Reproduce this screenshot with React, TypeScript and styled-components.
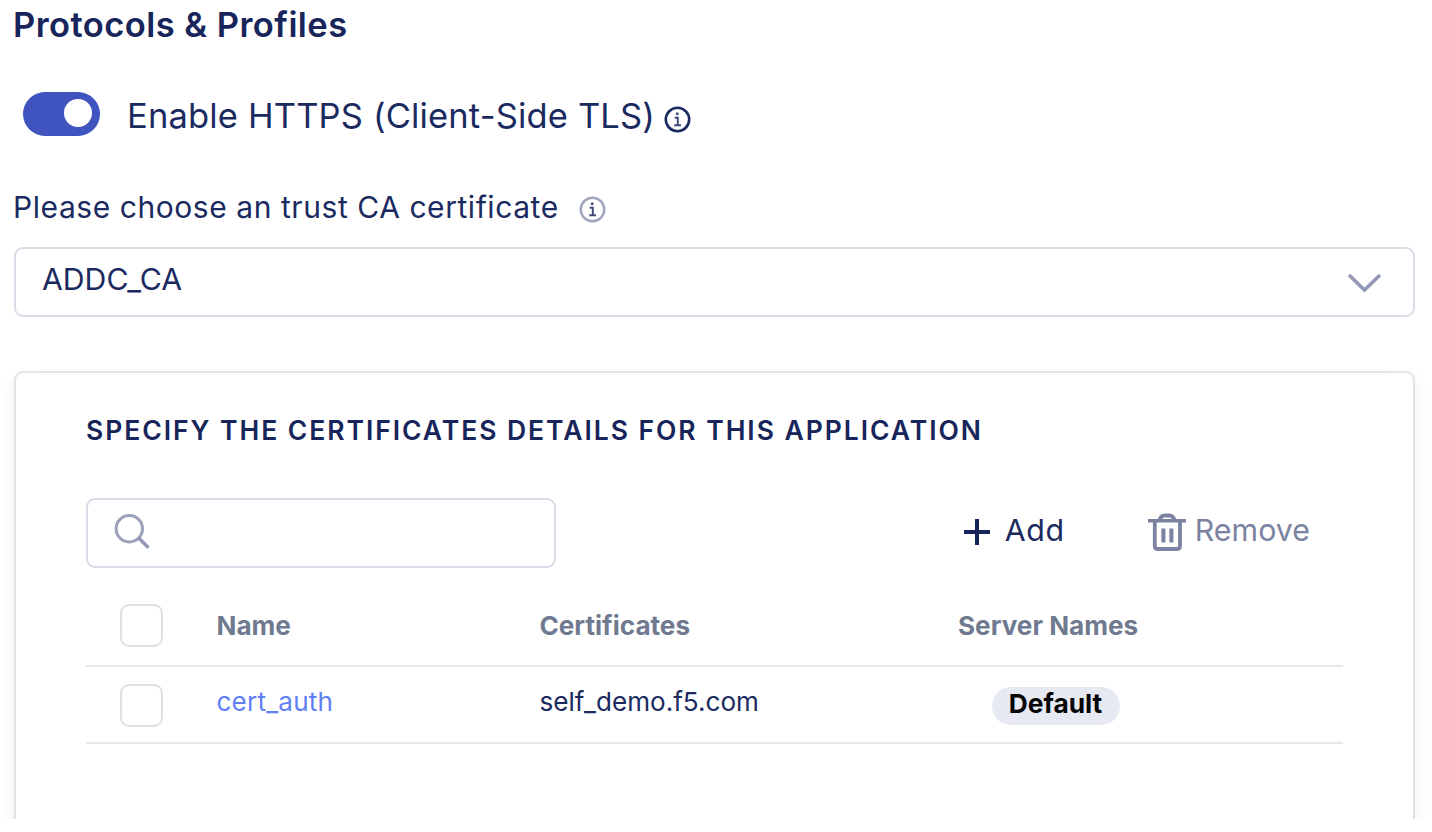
import React from "react";
import styled, { createGlobalStyle } from "styled-components";

const navy = "#1b2a5f";
const muted = "#a0a5bd";
const slate = "#7b82a2";

const GlobalStyle = createGlobalStyle`
  *, *::before, *::after { box-sizing: border-box; }
  body {
    margin: 0;
    background: #fff;
    color: ${navy};
    font-family: Inter, "Liberation Sans", sans-serif;
    overflow: hidden;
  }
`;

const Page = styled.main`
  display: flex;
  flex-direction: column;
  width: 1432px;
  height: 819px;
  padding: 0 17px 0 14px;
  overflow: hidden;

  & > * { flex-shrink: 0; }
`;

const Title = styled.h1`
  margin: 0 0 0 -1px;
  height: 48px;
  line-height: 49px;
  font-size: 34.5px;
  font-weight: 600;
  letter-spacing: 0.45px;
  color: #17255b;
`;

const ToggleRow = styled.div`
  display: flex;
  align-items: flex-start;
  height: 44px;
  margin-top: 44px;
  padding-left: 9px;
`;

const Switch = styled.button`
  display: flex;
  align-items: center;
  justify-content: flex-end;
  width: 77px;
  height: 44px;
  padding: 0 8px 2px 0;
  border: 0;
  border-radius: 22px;
  background: #3f54bf;
`;

const Knob = styled.span`
  width: 28px;
  height: 28px;
  border-radius: 50%;
  background: #fff;
`;

const ToggleLabel = styled.span`
  margin-left: 27px;
  line-height: 48px;
  font-size: 34.5px;
  letter-spacing: 0.16px;
  white-space: nowrap;
`;

const InfoMark = styled.svg<{ $left: number; $top: number }>`
  flex: none;
  margin: ${(p) => p.$top}px 0 0 ${(p) => p.$left}px;
`;

const FieldLabel = styled.label`
  display: flex;
  align-items: flex-start;
  height: 30px;
  margin: 56px 0 0 -1px;
  line-height: 31px;
  font-size: 30px;
  letter-spacing: 0.56px;
  white-space: nowrap;
`;

const Select = styled.div`
  display: flex;
  justify-content: space-between;
  height: 70px;
  margin-top: 25px;
  padding: 0 31px 0 26px;
  border: 2px solid #dadce6;
  border-radius: 9px;
  line-height: 61px;
  font-size: 30.2px;
`;

const Chevron = styled.svg`
  margin-top: 24px;
`;

const Card = styled.section`
  height: 480px;
  margin-top: 54px;
  padding: 42px 70px 0;
  border: 2px solid #e3e4eb;
  border-radius: 9px;
  box-shadow: 0 8px 16px rgba(20, 20, 50, 0.07);
`;

const CardHeading = styled.h2`
  margin: 0;
  height: 31px;
  line-height: 31px;
  font-size: 26.5px;
  font-weight: 600;
  letter-spacing: 1.95px;
  white-space: nowrap;
  color: #17255b;
`;

const Toolbar = styled.div`
  display: flex;
  justify-content: space-between;
  height: 70px;
  margin-top: 52px;
  padding-right: 33px;
`;

const SearchBox = styled.div`
  width: 470px;
  padding: 14px 0 0 26px;
  border: 2px solid #dadce6;
  border-radius: 9px;
`;

const Actions = styled.div`
  display: flex;
  height: 68px;
  gap: 83px;
`;

const Action = styled.button<{ $tone: string; $gap: number; $spacing: number }>`
  display: flex;
  align-items: center;
  gap: ${(p) => p.$gap}px;
  padding: 0;
  border: 0;
  background: none;
  color: ${(p) => p.$tone};
  font-family: inherit;
  font-size: 30.3px;
  letter-spacing: ${(p) => p.$spacing}px;
`;

const ActionText = styled.span`
  padding-bottom: 4px;
`;

const Table = styled.div`
  margin-top: 18px;
`;

const Row = styled.div<{ $head?: boolean }>`
  display: grid;
  grid-template-columns: 130.5px 323px 418.5px 1fr;
  align-items: center;
  height: ${(p) => (p.$head ? 81 : 77)}px;
  padding-top: ${(p) => (p.$head ? 0 : 2)}px;
  border-bottom: 2px solid #e7e7ed;
`;

const Checkbox = styled.span`
  width: 43px;
  height: 43px;
  margin-left: 34px;
  border: 2px solid #dfe0e8;
  border-radius: 9px;
`;

const HeadCell = styled.span`
  font-size: 26.1px;
  font-weight: 700;
  color: #6f7a90;
`;

const Cell = styled.span`
  padding-bottom: 8px;
  font-size: 26.1px;
`;

const CertLink = styled(Cell)`
  letter-spacing: 0.2px;
  color: #617ff5;
`;

const Badge = styled.span`
  justify-self: start;
  width: 128px;
  height: 38px;
  margin-left: 34px;
  padding-right: 1px;
  border-radius: 19px;
  background: #e6e8f2;
  color: #050505;
  text-align: center;
  line-height: 34px;
  font-size: 26.3px;
  font-weight: 700;
`;

function Info({ ring, left, top, weight }: { ring: string; left: number; top: number; weight: number }) {
  return (
    <InfoMark $left={left} $top={top} width="27" height="27" viewBox="0 0 27 27" fill="none">
      <circle cx="13.5" cy="13.5" r="11.7" stroke={ring} strokeWidth={weight} />
      <circle cx="13.2" cy="7.8" r="1.5" fill={navy} opacity="0.8" />
      <path d="M10.7 11.7H13.8V19M10.3 19.2H17" stroke={navy} strokeWidth="1.9" opacity="0.85" />
    </InfoMark>
  );
}

export default function App() {
  return (
    <>
      <GlobalStyle />
      <Page>
        <Title>Protocols &amp; Profiles</Title>
        <ToggleRow>
          <Switch role="switch" aria-checked="true">
            <Knob />
          </Switch>
          <ToggleLabel>Enable HTTPS (Client-Side TLS)</ToggleLabel>
          <Info ring={navy} left={9} top={14} weight={2.6} />
        </ToggleRow>
        <FieldLabel>
          Please choose an trust CA certificate
          <Info ring={muted} left={20} top={4} weight={2.5} />
        </FieldLabel>
        <Select>
          ADDC_CA
          <Chevron width="35" height="21" viewBox="0 0 35 21" fill="none">
            <path d="M2 2L17.5 17L33 2" stroke="#9298b6" strokeWidth="3.6" />
          </Chevron>
        </Select>
        <Card>
          <CardHeading>SPECIFY THE CERTIFICATES DETAILS FOR THIS APPLICATION</CardHeading>
          <Toolbar>
            <SearchBox>
              <svg width="36" height="36" viewBox="0 0 36 36" fill="none">
                <circle cx="15.3" cy="14.7" r="13.2" stroke="#9ca1bb" strokeWidth="3" />
                <path d="M24.7 24L34.5 33.8" stroke="#9298b6" strokeWidth="3.4" />
              </svg>
            </SearchBox>
            <Actions>
              <Action $tone={navy} $gap={15} $spacing={0.7}>
                <svg width="26" height="26" viewBox="0 0 26 26" fill="none">
                  <path d="M13 0V26M0 13H26" stroke="#17255b" strokeWidth="4" />
                </svg>
                <ActionText>Add</ActionText>
              </Action>
              <Action $tone={slate} $gap={9} $spacing={0.05}>
                <svg width="38" height="38" viewBox="0 0 38 38" fill="none" stroke={slate}>
                  <path d="M0 7.8H38" strokeWidth="3.6" />
                  <path d="M11.2 7.5L13 4.2Q14.2 2.4 16.3 2.4H21.7Q23.8 2.4 25 4.2L26.8 7.5" strokeWidth="4" />
                  <path d="M6.8 8V33Q6.8 36 9.8 36H29Q32 36 32 33V8" strokeWidth="3.8" />
                  <path d="M15.4 15.5V29.5M23.4 15.5V29.5" strokeWidth="4" />
                </svg>
                <ActionText>Remove</ActionText>
              </Action>
            </Actions>
          </Toolbar>
          <Table>
            <Row $head>
              <Checkbox />
              <HeadCell>Name</HeadCell>
              <HeadCell>Certificates</HeadCell>
              <HeadCell>Server Names</HeadCell>
            </Row>
            <Row>
              <Checkbox />
              <CertLink>cert_auth</CertLink>
              <Cell>self_demo.f5.com</Cell>
              <Badge>Default</Badge>
            </Row>
          </Table>
        </Card>
      </Page>
    </>
  );
}
